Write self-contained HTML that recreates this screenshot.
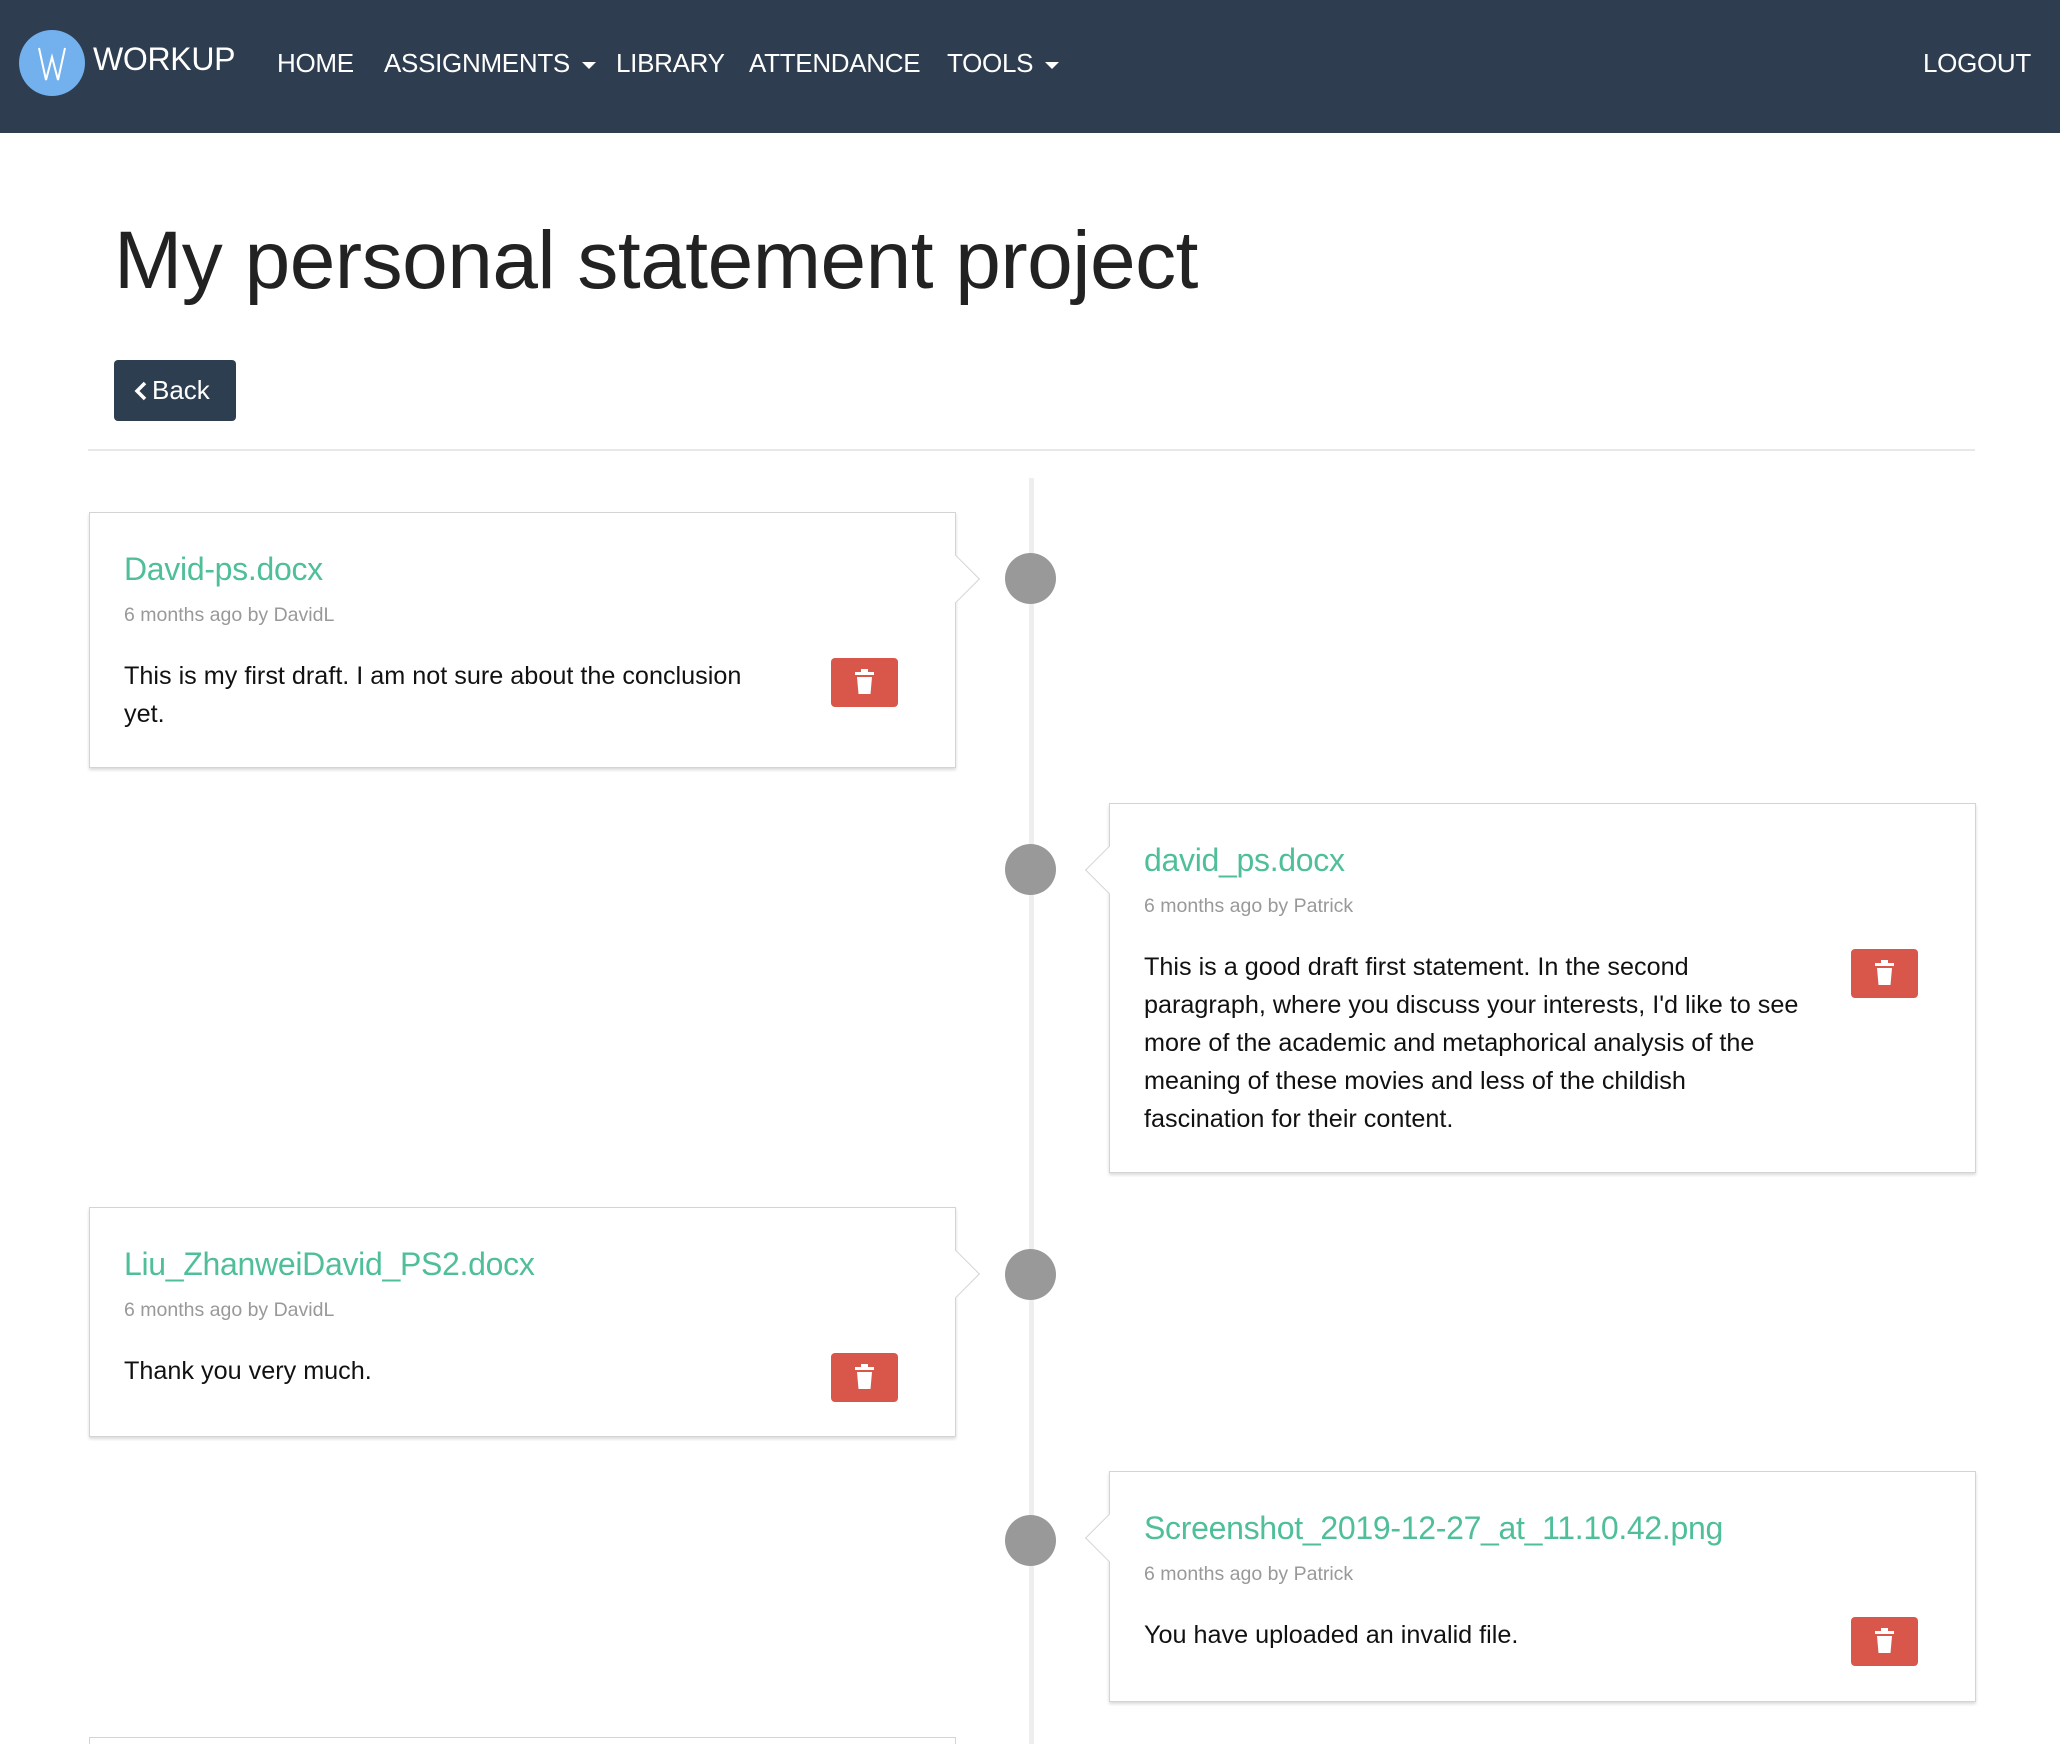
<!DOCTYPE html>
<html><head><meta charset="utf-8">
<style>
*{box-sizing:border-box;margin:0;padding:0}
html,body{width:2060px;height:1744px;overflow:hidden}
body{background:#fff;font-family:"Liberation Sans",sans-serif;position:relative;color:#222}
.nav{position:absolute;left:0;top:0;width:2060px;height:133px;background:#2e3d4f}
.nav .it{position:absolute;top:0;height:127px;line-height:127px;color:#fff;font-size:26px;letter-spacing:-0.3px;white-space:nowrap}
.caret{display:inline-block;width:0;height:0;border-left:7px solid transparent;border-right:7px solid transparent;border-top:7px solid #fff;vertical-align:middle;margin-left:12px}
.logo{position:absolute;left:19px;top:30px;width:66px;height:66px;border-radius:50%;background:#72b0ee}
h1{position:absolute;left:114px;top:220px;font-size:82px;font-weight:normal;color:#222;line-height:1;letter-spacing:-0.5px;white-space:nowrap}
.back{position:absolute;left:114px;top:360px;width:122px;height:61px;background:#2c3e50;border-radius:4px;color:#fff;font-size:26px;line-height:61px;padding-left:20px}
.hr{position:absolute;left:88px;top:449px;width:1887px;height:2px;background:#e8e8e8}
.line{position:absolute;left:1029px;top:478px;width:5px;height:1300px;background:#eee}
.dot{position:absolute;left:1005px;width:51px;height:51px;border-radius:50%;background:#999}
.card{position:absolute;width:867px;background:#fff;border:1px solid #d4d4d4;box-shadow:0 2px 3px rgba(0,0,0,.15)}
.card .t{position:absolute;left:34px;top:35px;font-size:32px;line-height:42px;color:#4fbf98;white-space:nowrap;letter-spacing:-0.3px}
.card .m{position:absolute;left:34px;top:90px;font-size:19.5px;line-height:24px;color:#999;white-space:nowrap}
.card .b{position:absolute;left:34px;top:144px;font-size:25.2px;line-height:38px;color:#111;white-space:nowrap;letter-spacing:0}
.card .del{position:absolute;left:741px;top:145px;width:67px;height:49px;background:#d9574a;border-radius:4px}
.card .del svg{position:absolute;left:23px;top:11px}
.arr{position:absolute;width:34px;height:34px;background:#fff;border:1px solid #d4d4d4;transform:rotate(45deg)}
.L .arr{right:-18px;border-left:none;border-bottom:none}
.R .arr{left:-18px;border-right:none;border-top:none}
</style></head><body>
<div class="nav">
 <div class="logo"><svg width="66" height="66" viewBox="0 0 66 66"><polyline points="20,18 27,50 33,27 39,50 46,18" fill="none" stroke="#fff" stroke-width="2"/></svg></div>
 <div class="it" style="left:93px;font-size:32px;top:-4px">WORKUP</div>
 <div class="it" style="left:277px">HOME</div>
 <div class="it" style="left:384px">ASSIGNMENTS<span class="caret"></span></div>
 <div class="it" style="left:616px">LIBRARY</div>
 <div class="it" style="left:749px">ATTENDANCE</div>
 <div class="it" style="left:947px">TOOLS<span class="caret"></span></div>
 <div class="it" style="left:1923px;font-size:26px">LOGOUT</div>
</div>
<h1>My personal statement project</h1>
<div class="back"><svg width="14" height="20" viewBox="0 0 14 20" style="vertical-align:-2px;margin-right:4px"><polyline points="11,2 3,10 11,18" fill="none" stroke="#fff" stroke-width="3.5"/></svg>Back</div>
<div class="hr"></div>
<div class="line"></div>
<div class="dot" style="top:553px"></div>
<div class="dot" style="top:844px"></div>
<div class="dot" style="top:1249px"></div>
<div class="dot" style="top:1515px"></div>

<div class="card L" style="left:89px;top:512px;height:256px">
 <div class="arr" style="top:49px"></div>
 <div class="t">David-ps.docx</div>
 <div class="m">6 months ago by DavidL</div>
 <div class="b">This is my first draft. I am not sure about the conclusion<br>yet.</div>
 <div class="del"><svg width="21" height="27" viewBox="0 0 21 27"><rect x="1" y="3" width="19" height="3" fill="#fff"/><rect x="7" y="0" width="7" height="4" fill="#fff"/><path d="M3 8h15l-1.5 17h-12z" fill="#fff"/></svg></div>
</div>

<div class="card R" style="left:1109px;top:803px;height:370px">
 <div class="arr" style="top:49px"></div>
 <div class="t">david_ps.docx</div>
 <div class="m">6 months ago by Patrick</div>
 <div class="b">This is a good draft first statement. In the second<br>paragraph, where you discuss your interests, I'd like to see<br>more of the academic and metaphorical analysis of the<br>meaning of these movies and less of the childish<br>fascination for their content.</div>
 <div class="del"><svg width="21" height="27" viewBox="0 0 21 27"><rect x="1" y="3" width="19" height="3" fill="#fff"/><rect x="7" y="0" width="7" height="4" fill="#fff"/><path d="M3 8h15l-1.5 17h-12z" fill="#fff"/></svg></div>
</div>

<div class="card L" style="left:89px;top:1207px;height:230px">
 <div class="arr" style="top:49px"></div>
 <div class="t">Liu_ZhanweiDavid_PS2.docx</div>
 <div class="m">6 months ago by DavidL</div>
 <div class="b">Thank you very much.</div>
 <div class="del"><svg width="21" height="27" viewBox="0 0 21 27"><rect x="1" y="3" width="19" height="3" fill="#fff"/><rect x="7" y="0" width="7" height="4" fill="#fff"/><path d="M3 8h15l-1.5 17h-12z" fill="#fff"/></svg></div>
</div>

<div class="card R" style="left:1109px;top:1471px;height:231px">
 <div class="arr" style="top:49px"></div>
 <div class="t">Screenshot_2019-12-27_at_11.10.42.png</div>
 <div class="m">6 months ago by Patrick</div>
 <div class="b">You have uploaded an invalid file.</div>
 <div class="del"><svg width="21" height="27" viewBox="0 0 21 27"><rect x="1" y="3" width="19" height="3" fill="#fff"/><rect x="7" y="0" width="7" height="4" fill="#fff"/><path d="M3 8h15l-1.5 17h-12z" fill="#fff"/></svg></div>
</div>

<div class="card L" style="left:89px;top:1737px;height:7px;box-shadow:none;border-bottom:none"></div>
</body></html>
